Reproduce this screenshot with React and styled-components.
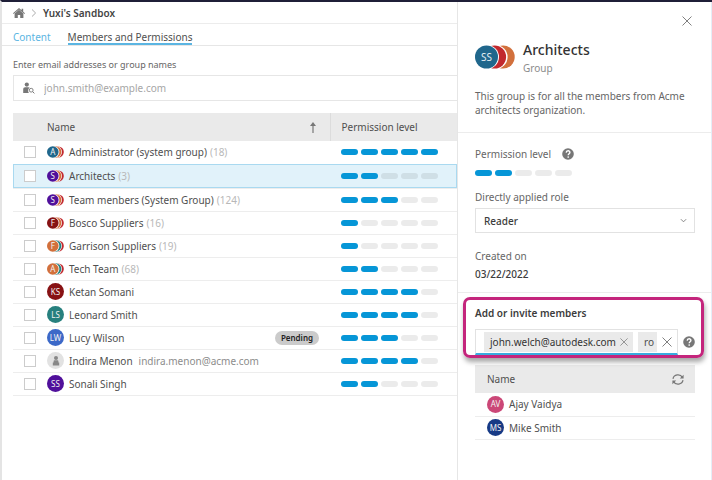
import React, { useState } from "react";
import styled, { createGlobalStyle } from "styled-components";

const GlobalStyle = createGlobalStyle`
    * {
        box-sizing: border-box;
    }
    body {
        margin: 0;
        background: #fff;
        color: #4f4f4f;
        font-family: "Noto Sans", "Open Sans", sans-serif;
        font-size: 10px;
        line-height: 14px;
    }
    button, input, select {
        font: inherit;
        color: inherit;
    }
    p, h1, h2, h3 {
        margin: 0;
        font-weight: 400;
    }
`

const Page = styled.div`
    display: flex;
    min-height: 100vh;
    border-top: 2px solid #1f1f38;
    border-left: 2px solid #e4e4e4;
`

const Main = styled.main`
    flex: 1;
    min-width: 0;
`

const Breadcrumb = styled.nav`
    display: flex;
    align-items: center;
    gap: 6px;
    height: 22px;
    padding-left: 11px;
    border-bottom: 1px solid #ececec;
    &>a {
        display: flex;
        color: #777;
    }
`

const Current = styled.h1`
    font-size: 10px;
    font-weight: 600;
    color: #444;
`

const Tabs = styled.nav`
    display: flex;
    align-items: flex-end;
    gap: 17px;
    height: 22px;
    padding-left: 11px;
    border-bottom: 1px solid #e6e6e6;
`

const Tab = styled.a`
    line-height: 12px;
    text-decoration: none;
    color: ${({ $active }) => $active ? "#4f4f4f" : "#5bb5e2"};
    border-bottom: 2px solid ${({ $active }) => $active ? "#5bb5e2" : "transparent"};
`

const Invite = styled.div`
    padding: 12px 0 12px 11px;
`

const Label = styled.label`
    display: block;
    font-size: ${({ $small }) => $small ? "9px" : "10px"};
    font-weight: ${({ $bold }) => $bold ? 600 : 400};
    color: ${({ $bold }) => $bold ? "#3c3c3c" : "#666"};
`

const Search = styled.div`
    display: flex;
    align-items: center;
    gap: 9px;
    height: 26px;
    margin-top: 3px;
    padding-left: 9px;
    border: 1px solid #e6e6e6;
    border-right: 0;
    &>input {
        flex: 1;
        min-width: 0;
        padding: 0;
        border: 0;
        outline: 0;
        background: none;
    }
    &>input::placeholder {
        color: #a6a6a6;
        opacity: 1;
    }
`

const TableWrap = styled.div`
    padding-left: 11px;
`

const Table = styled.table`
    width: 100%;
    border-collapse: collapse;
    table-layout: fixed;
    th, td {
        padding: 0;
        text-align: left;
        font-weight: 400;
    }
    th {
        height: 28px;
        background: #eaeaea;
    }
`

const CheckHead = styled.th`
    width: 34px;
`

const LevelHead = styled.th`
    width: 127px;
    border-left: 1px solid #dcdcdc;
    &&& {
        padding-left: 11px;
    }
`

const HeadInner = styled.div`
    display: flex;
    align-items: center;
    justify-content: space-between;
    padding-right: ${({ $pad }) => $pad || 0};
`

const Row = styled.tr`
    height: ${({ $selected }) => $selected ? "24px" : "23px"};
    background: ${({ $selected }) => $selected ? "#e1f2fa" : "none"};
    border-bottom: 1px solid #ededed;
    ${({ $selected }) => $selected && `
        outline: 1px solid #a9d9f0;
        outline-offset: -1px;
    `}
`

const Check = styled.input`
    display: block;
    appearance: none;
    width: 12px;
    height: 12px;
    margin: 0 0 0 11px;
    border: 1px solid #ccc;
    background: #fff;
    &:checked {
        background: #0696d7;
    }
`

const NameCell = styled.div`
    display: flex;
    align-items: center;
    gap: 5px;
    white-space: nowrap;
`

const Muted = styled.span`
    color: ${({ $dark }) => $dark ? "#8c8c8c" : "#b8b8b8"};
    margin-left: ${({ $dark }) => $dark ? "6px" : "3px"};
`

const Pending = styled.span`
    margin: 0 11px 0 auto;
    padding: 0 6px;
    border-radius: 7px;
    background: #cbcbcb;
    color: #222;
    font-size: 8px;
    font-weight: 600;
`

const Disc = styled.span`
    display: flex;
    align-items: center;
    justify-content: center;
    flex: none;
    width: 17px;
    height: 17px;
    border-radius: 50%;
    background: ${({ $color }) => $color};
    color: #f2f2f2;
    font-size: 8px;
`

const LevelCell = styled.td`
    &&& {
        padding-left: 11px;
    }
`

const Pills = styled.div`
    display: flex;
    gap: 3px;
`

const Pill = styled.span`
    width: 17px;
    height: 6px;
    border-radius: 3px;
    background: ${({ $on }) => $on ? "#0696d7" : "rgba(0, 0, 0, 0.08)"};
`

const Panel = styled.aside`
    flex: none;
    width: 255px;
    border-left: 1px solid #e6e6e6;
    border-right: 1px solid #e4eef8;
`

const Section = styled.section`
    padding: 0 16px 0 17px;
    border-bottom: ${({ $last }) => $last ? 0 : "1px solid #ececec"};
`

const IconButton = styled.button`
    display: flex;
    flex: none;
    padding: 0;
    border: 0;
    background: none;
    color: #808080;
    cursor: pointer;
`

const CloseRow = styled.div`
    display: flex;
    justify-content: flex-end;
    padding: 14px 3px 0 0;
`

const GroupHead = styled.div`
    display: flex;
    align-items: center;
    gap: 8px;
    padding-top: 13px;
`

const GroupName = styled.h2`
    font-size: 14px;
    line-height: 22px;
    font-weight: 500;
    color: #333;
`

const GroupKind = styled.p`
    color: #8c8c8c;
`

const Description = styled.p`
    padding: 14px 0 15px;
    color: #666;
`

const Inline = styled.div`
    display: flex;
    align-items: center;
    gap: 11px;
    padding: 14px 0 9px;
`

const SelectWrap = styled.div`
    position: relative;
    margin-top: 4px;
    &>svg {
        position: absolute;
        right: 8px;
        top: 9px;
        pointer-events: none;
    }
`

const Select = styled.select`
    display: block;
    appearance: none;
    width: 100%;
    height: 25px;
    padding: 0 8px;
    border: 1px solid #e2e2e2;
    border-radius: 0;
    background: #fff;
    color: #3c3c3c;
    font-weight: 500;
`

const Field = styled.div`
    padding-top: ${({ $top }) => $top || "16px"};
`

const DateText = styled.p`
    padding: 4px 0 11px;
    color: #3c3c3c;
    font-weight: 500;
`

const Highlight = styled.div`
    position: relative;
    z-index: 1;
    margin: 4px -9px 0 -12px;
    padding: 6px 6px 0 9px;
    border: 3px solid #c4257c;
    border-radius: 7px;
    box-shadow: 1px 4px 5px rgba(0, 0, 0, 0.35);
`

const TokenRow = styled.div`
    display: flex;
    align-items: center;
    gap: 5px;
    margin-top: 9px;
`

const TokenBox = styled.div`
    display: flex;
    align-items: center;
    flex: 1;
    min-width: 0;
    gap: 5px;
    height: 26px;
    padding-left: 8px;
    border: 1px solid #e2e2e2;
    border-bottom: 2px solid #38abdf;
`

const Token = styled.span`
    display: flex;
    align-items: center;
    gap: 4px;
    height: 20px;
    padding: 0 5px 0 6px;
    background: #eaeaea;
    color: #333;
`

const TokenInput = styled.input`
    width: 19px;
    height: 20px;
    padding: 0 0 0 6px;
    border: 0;
    outline: 0;
    background: #eaeaea;
`

const MemberTable = styled(Table)`
    margin-top: 7px;
    th, td {
        padding: 0 11px 0 12px;
    }
`

const Home = () => (
    <svg width="12" height="10" viewBox="0 0 12 10" fill="currentColor" aria-hidden="true">
        <path d="M6 0 0 5.2l.6.7L6 1.4l5.4 4.5.6-.7-1.8-1.5V.8H8.6v1.5z"/>
        <path d="M6 1.8 1.6 5.6V10h3.2V7h2.4v3h3.2V5.6z"/>
    </svg>
)

const Chevron = ({ down }) => (
    <svg width={down ? 7 : 6} height={down ? 7 : 8} viewBox="0 0 6 8" fill="none" stroke={down ? "#777" : "#aaa"} strokeWidth="1" aria-hidden="true">
        {down ? <path d="M0 2.5 3 5.5 6 2.5"/> : <path d="m1 .5 3.6 3.5L1 7.5"/>}
    </svg>
)

const Cross = ({ size }) => (
    <svg width={size} height={size} viewBox="0 0 10 10" fill="none" stroke="currentColor" strokeWidth="1" aria-hidden="true">
        <path d="m.5.5 9 9m0-9-9 9"/>
    </svg>
)

const Help = () => (
    <svg width="12" height="12" viewBox="0 0 12 12" aria-hidden="true">
        <circle cx="6" cy="6" r="5.8" fill="#777"/>
        <path d="M4.2 4.6C4.3 2.2 8 2.3 7.9 4.4 7.8 5.7 6.2 5.7 6.2 7.2" fill="none" stroke="#fff" strokeWidth="1.4"/>
        <circle cx="6.2" cy="9" r=".85" fill="#fff"/>
    </svg>
)

const PersonSearch = () => (
    <svg width="12" height="12" viewBox="0 0 12 12" aria-hidden="true">
        <circle cx="3.8" cy="2.6" r="2.1" fill="#777"/>
        <path d="M.2 11V7.4c0-1.4.8-2.2 2-2.2h3.2c.6 0 1 .2 1.3.6-1.9 1.2-2 3.6-.8 5.2z" fill="#777"/>
        <circle cx="8.2" cy="8.2" r="1.9" fill="none" stroke="#777" strokeWidth=".9"/>
        <path d="m9.6 9.6 1.8 1.8" stroke="#777" strokeWidth="1"/>
    </svg>
)

const Person = () => (
    <svg width="8" height="10" viewBox="0 0 8 10" fill="#888" aria-hidden="true">
        <circle cx="4" cy="2" r="2"/>
        <path d="M.8 9.6V6.6h.8V5c0-.4.4-.7.8-.7h3.2c.4 0 .8.3.8.7v1.6h.8v3z"/>
    </svg>
)

const ArrowUp = () => (
    <svg width="6" height="11" viewBox="0 0 6 11" aria-hidden="true">
        <path d="M3 0 6 4H0z" fill="#777"/>
        <path d="M3 3v8" stroke="#777" strokeWidth="1.2"/>
    </svg>
)

const Refresh = () => (
    <svg width="12" height="11" viewBox="0 0 12 11" fill="none" stroke="#777" strokeWidth="1.2" aria-hidden="true">
        <path d="M1 4.8A5 4.6 0 0 1 10.4 3.4M11 6.2A5 4.6 0 0 1 1.6 7.6"/>
        <path d="M11.6.8v3.8H7.8zM.4 10.2V6.4h3.8z" fill="#777" stroke="none"/>
    </svg>
)

const GroupAvatar = ({ letter, colors }) => (
    <svg width="17" height="12" viewBox="0 0 17 12" aria-hidden="true">
        <circle cx="11.2" cy="6" r="5.6" fill={colors[2]}/>
        <circle cx="9.1" cy="6" r="5.9" fill="#fff"/>
        <circle cx="8.7" cy="6" r="5.7" fill={colors[1]}/>
        <circle cx="6.4" cy="6" r="6" fill="#fff"/>
        <circle cx="5.8" cy="6" r="5.8" fill={colors[0]}/>
        <text x="5.8" y="9" fontSize="8" fill="#f2f2f2" textAnchor="middle">{letter}</text>
    </svg>
)

const LargeAvatar = () => (
    <svg width="40" height="24" viewBox="0 0 40 24" aria-hidden="true">
        <circle cx="28.2" cy="12" r="11.5" fill="#d2703c"/>
        <circle cx="20.6" cy="12" r="12" fill="#fff"/>
        <circle cx="19.6" cy="12" r="11.5" fill="#c2282d"/>
        <circle cx="12" cy="12" r="12" fill="#fff"/>
        <circle cx="11.5" cy="12" r="11.5" fill="#20678c"/>
        <text x="11.5" y="15.6" fontSize="10" fill="#e4eef3" textAnchor="middle">SS</text>
    </svg>
)

const Level = ({ value }) => (
    <Pills role="img" aria-label={`${value} / 5`}>
        {[1, 2, 3, 4, 5].map(n => <Pill key={n} $on={n <= value}/>)}
    </Pills>
)

const warm = ["#d2703c", "#c2282d"]
const cool = ["#238482", "#c2282d"]

const members = [
    { name: "Administrator (system group)", count: 18, level: 5, letter: "A", colors: ["#20678c", ...warm] },
    { name: "Architects", count: 3, level: 2, letter: "S", colors: ["#50109b", ...warm], selected: true },
    { name: "Team menbers (System Group)", count: 124, level: 3, letter: "S", colors: ["#50109b", ...warm] },
    { name: "Bosco Suppliers", count: 16, level: 1, letter: "F", colors: ["#871214", ...warm] },
    { name: "Garrison Suppliers", count: 19, level: 1, letter: "F", colors: ["#d2703c", ...cool] },
    { name: "Tech Team", count: 68, level: 2, letter: "A", colors: ["#d2703c", ...cool] },
    { name: "Ketan Somani", level: 4, initials: "KS", color: "#871214" },
    { name: "Leonard Smith", level: 4, initials: "LS", color: "#27807e" },
    { name: "Lucy Wilson", level: 3, initials: "LW", color: "#3c69c8", pending: true },
    { name: "Indira Menon", level: 4, email: "indira.menon@acme.com", color: "#e2e2e2" },
    { name: "Sonali Singh", level: 2, initials: "SS", color: "#50109b" },
]

const invited = [
    { name: "Ajay Vaidya", initials: "AV", color: "#cb4777" },
    { name: "Mike Smith", initials: "MS", color: "#173a85" },
]

const MemberRow = ({ member }) => (
    <Row $selected={member.selected}>
        <td><Check type="checkbox" aria-label={member.name}/></td>
        <td>
            <NameCell>
                {member.colors
                    ? <GroupAvatar letter={member.letter} colors={member.colors}/>
                    : <Disc $color={member.color}>{member.initials || <Person/>}</Disc>}
                <span>
                    {member.name}
                    {member.count && <Muted>({member.count})</Muted>}
                    {member.email && <Muted $dark>{member.email}</Muted>}
                </span>
                {member.pending && <Pending>Pending</Pending>}
            </NameCell>
        </td>
        <LevelCell><Level value={member.level}/></LevelCell>
    </Row>
)

const GroupPanel = () => {
    const [query, setQuery] = useState("ro")

    return (
        <Panel>
            <Section>
                <CloseRow>
                    <IconButton aria-label="Close"><Cross size={10}/></IconButton>
                </CloseRow>
                <GroupHead>
                    <LargeAvatar/>
                    <div>
                        <GroupName>Architects</GroupName>
                        <GroupKind>Group</GroupKind>
                    </div>
                </GroupHead>
                <Description>This group is for all the members from Acme architects organization.</Description>
            </Section>
            <Section>
                <Inline>
                    <Label as="span">Permission level</Label>
                    <IconButton aria-label="About permission levels"><Help/></IconButton>
                </Inline>
                <Level value={2}/>
                <Field $top="14px">
                    <Label htmlFor="role">Directly applied role</Label>
                    <SelectWrap>
                        <Select id="role"><option>Reader</option></Select>
                        <Chevron down/>
                    </SelectWrap>
                </Field>
                <Field>
                    <Label as="p">Created on</Label>
                    <DateText>03/22/2022</DateText>
                </Field>
            </Section>
            <Section $last>
                <Highlight>
                    <Label htmlFor="members" $bold>Add or invite members</Label>
                    <TokenRow>
                        <TokenBox>
                            <Token>
                                john.welch@autodesk.com
                                <IconButton aria-label="Remove"><Cross size={8}/></IconButton>
                            </Token>
                            <TokenInput id="members" value={query} onChange={e => setQuery(e.target.value)}/>
                            <IconButton aria-label="Clear" onClick={() => setQuery("")}><Cross size={10}/></IconButton>
                        </TokenBox>
                        <IconButton aria-label="About inviting members"><Help/></IconButton>
                    </TokenRow>
                </Highlight>
                <MemberTable>
                    <thead>
                        <tr>
                            <th>
                                <HeadInner>
                                    Name
                                    <IconButton aria-label="Refresh"><Refresh/></IconButton>
                                </HeadInner>
                            </th>
                        </tr>
                    </thead>
                    <tbody>
                        {invited.map(person => (
                            <Row key={person.name}>
                                <td>
                                    <NameCell>
                                        <Disc $color={person.color}>{person.initials}</Disc>
                                        {person.name}
                                    </NameCell>
                                </td>
                            </Row>
                        ))}
                    </tbody>
                </MemberTable>
            </Section>
        </Panel>
    )
}

const App = () => (
    <>
        <GlobalStyle/>
        <Page>
            <Main>
                <Breadcrumb>
                    <a href="#home" aria-label="Home"><Home/></a>
                    <Chevron/>
                    <Current>Yuxi's Sandbox</Current>
                </Breadcrumb>
                <Tabs>
                    <Tab href="#content">Content</Tab>
                    <Tab href="#members" $active>Members and Permissions</Tab>
                </Tabs>
                <Invite>
                    <Label htmlFor="invite" $small>Enter email addresses or group names</Label>
                    <Search>
                        <PersonSearch/>
                        <input id="invite" type="email" placeholder="john.smith@example.com"/>
                    </Search>
                </Invite>
                <TableWrap>
                    <Table>
                        <thead>
                            <tr>
                                <CheckHead/>
                                <th><HeadInner $pad="14px">Name <ArrowUp/></HeadInner></th>
                                <LevelHead>Permission level</LevelHead>
                            </tr>
                        </thead>
                        <tbody>
                            {members.map(member => <MemberRow key={member.name} member={member}/>)}
                        </tbody>
                    </Table>
                </TableWrap>
            </Main>
            <GroupPanel/>
        </Page>
    </>
)

export default App
